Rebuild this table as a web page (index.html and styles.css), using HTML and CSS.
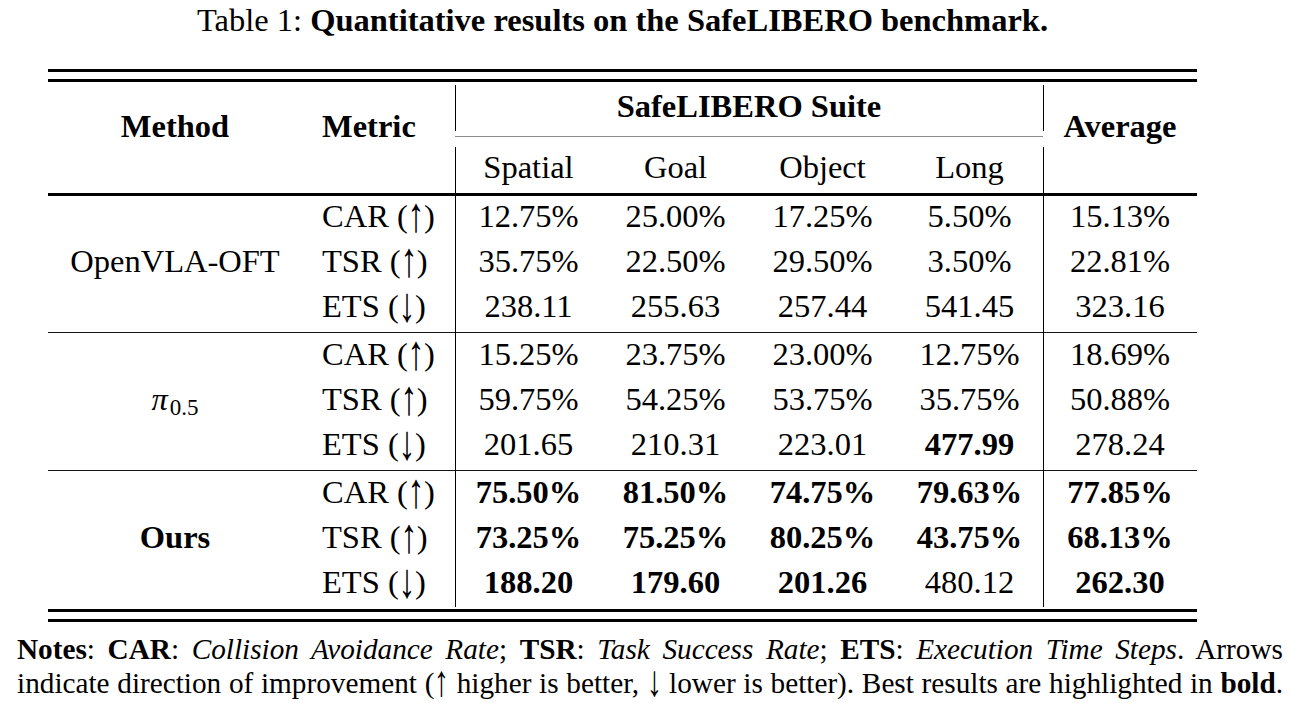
FILE: index.html
```html
<!DOCTYPE html>
<html lang="en">
<head>
<meta charset="utf-8">
<title>Table 1: Quantitative results on the SafeLIBERO benchmark</title>
<link rel="stylesheet" href="styles.css">
</head>
<body>
<main class="page">
  <figure class="table-figure">
    <p class="caption">Table 1: <b>Quantitative results on the SafeLIBERO benchmark.</b></p>
    <div class="results">
      <div class="rule heavy"></div>
      <div class="rule heavy"></div>
      <div class="thead">
        <div class="h-method">Method</div>
        <div class="h-metric">Metric</div>
        <div class="suite">
          <div class="suite-title">SafeLIBERO Suite</div>
          <div class="cmid"></div>
          <div class="suite-cols"><span>Spatial</span><span>Goal</span><span>Object</span><span>Long</span></div>
        </div>
        <div class="h-avg">Average</div>
      </div>
      <div class="rule mid"></div>

      <div class="row"><span class="method"></span><span class="metric">CAR (<span class="arr">↑</span>)</span><span>12.75%</span><span>25.00%</span><span>17.25%</span><span>5.50%</span><span>15.13%</span></div>
      <div class="row"><span class="method">OpenVLA-OFT</span><span class="metric">TSR (<span class="arr">↑</span>)</span><span>35.75%</span><span>22.50%</span><span>29.50%</span><span>3.50%</span><span>22.81%</span></div>
      <div class="row"><span class="method"></span><span class="metric">ETS (<span class="arr">↓</span>)</span><span>238.11</span><span>255.63</span><span>257.44</span><span>541.45</span><span>323.16</span></div>
      <div class="row sep"><i></i><i></i></div>

      <div class="row"><span class="method"></span><span class="metric">CAR (<span class="arr">↑</span>)</span><span>15.25%</span><span>23.75%</span><span>23.00%</span><span>12.75%</span><span>18.69%</span></div>
      <div class="row"><span class="method"><span class="pi"><i>π</i><sub>0.5</sub></span></span><span class="metric">TSR (<span class="arr">↑</span>)</span><span>59.75%</span><span>54.25%</span><span>53.75%</span><span>35.75%</span><span>50.88%</span></div>
      <div class="row"><span class="method"></span><span class="metric">ETS (<span class="arr">↓</span>)</span><span>201.65</span><span>210.31</span><span>223.01</span><span class="best">477.99</span><span>278.24</span></div>
      <div class="row sep"><i></i><i></i></div>

      <div class="row"><span class="method"></span><span class="metric">CAR (<span class="arr">↑</span>)</span><span class="best">75.50%</span><span class="best">81.50%</span><span class="best">74.75%</span><span class="best">79.63%</span><span class="best">77.85%</span></div>
      <div class="row"><span class="method best">Ours</span><span class="metric">TSR (<span class="arr">↑</span>)</span><span class="best">73.25%</span><span class="best">75.25%</span><span class="best">80.25%</span><span class="best">43.75%</span><span class="best">68.13%</span></div>
      <div class="row"><span class="method"></span><span class="metric">ETS (<span class="arr">↓</span>)</span><span class="best">188.20</span><span class="best">179.60</span><span class="best">201.26</span><span>480.12</span><span class="best">262.30</span></div>
      <div class="tail"></div>

      <div class="rule heavy"></div>
      <div class="rule heavy"></div>
    </div>
  </figure>
  <p class="notes">
    <span class="line"><b>Notes</b>: <b>CAR</b>: <i>Collision Avoidance Rate</i>; <b>TSR</b>: <i>Task Success Rate</i>; <b>ETS</b>: <i>Execution Time Steps</i>. Arrows</span>
    <span class="line">indicate direction of improvement (<span class="arr">↑</span> higher is better, <span class="arr">↓</span> lower is better). Best results are highlighted in <b>bold</b>.</span>
  </p>
</main>
</body>
</html>
```

FILE: styles.css
```css
html, body {
  margin: 0;
  padding: 0;
  background: #ffffff;
}

body {
  color: #000000;
  font-family: "Liberation Serif", "DejaVu Serif", serif;
}

.page {
  width: 1291px;
}

.table-figure {
  margin: 0 0 0 48px;
  width: 1149px;
}

.caption {
  margin: 0 0 29px;
  font-size: 32.5px;
  line-height: 40px;
  text-align: center;
}

.results {
  font-size: 32.5px;
  line-height: 40px;
}

.rule.heavy {
  height: 3px;
  background: #000000;
}

.rule.heavy + .rule.heavy {
  margin-top: 7px;
}

.rule.mid {
  height: 3px;
  background: #000000;
}

.thead,
.row {
  display: grid;
  grid-template-columns: 254px 153px repeat(4, 147px) 154px;
}

.thead {
  height: 111px;
  font-weight: bold;
}

.h-method,
.h-avg {
  padding-top: 24px;
  text-align: center;
}

.h-metric {
  padding: 24px 0 0 20px;
}

.suite {
  grid-column: 3 / 7;
  display: flex;
  flex-direction: column;
  padding-top: 3px;
}

.suite-title {
  box-sizing: border-box;
  height: 46px;
  padding-top: 1px;
  text-align: center;
  box-shadow: inset 1px 0 0 #000000, 1px 0 0 #000000;
}

.cmid {
  height: 1px;
  margin-top: 5px;
  background: #8c8c8c;
}

.suite-cols {
  display: grid;
  grid-template-columns: repeat(4, 1fr);
  height: 46px;
  margin-top: 10px;
  font-weight: normal;
  text-align: center;
  box-shadow: inset 1px 0 0 #000000, 1px 0 0 #000000;
}

.row {
  height: 45px;
}

.row > span {
  text-align: center;
  white-space: nowrap;
}

.row > .metric {
  padding-left: 20px;
  text-align: left;
}

.row > :nth-child(3),
.row > :nth-child(7) {
  box-shadow: inset 1px 0 0 #000000;
}

.best {
  font-weight: bold;
}

.arr {
  display: inline-block;
  line-height: 20px;
  transform: scale(1.05, 1.5);
  transform-origin: 50% 66%;
}

.pi i {
  font-style: italic;
}

.pi sub {
  font-size: 23px;
  line-height: 0;
  vertical-align: -5px;
  margin-left: 2px;
}

.row.sep {
  height: 3px;
  background: linear-gradient(to bottom, transparent 1px, #141414 1px, #141414 2px, transparent 2px);
}

.row.sep > i {
  grid-column: 3;
  box-shadow: inset 1px 0 0 #000000;
}

.row.sep > i + i {
  grid-column: 7;
}

.tail {
  height: 2px;
}

.notes {
  margin: 10px 0 0 17px;
  width: 1266px;
  font-size: 29.25px;
  line-height: 34px;
}

.notes .line {
  display: block;
  white-space: nowrap;
  text-align: justify;
  text-align-last: justify;
}
```
